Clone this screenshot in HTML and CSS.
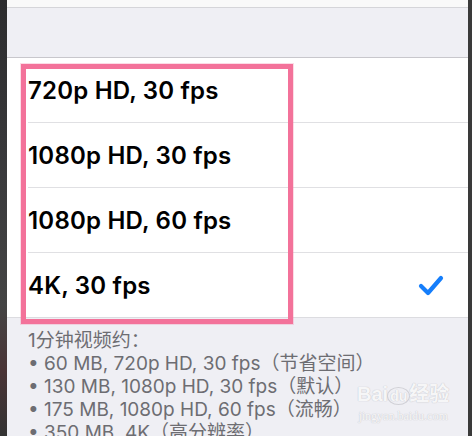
FILE: index.html
```html
<!DOCTYPE html>
<html>
<head>
    <title>视频录制</title>
    <link rel="stylesheet" href="styles.css">
</head>
<body>
    <div class="screen">
        <div class="edge-left"></div>
        <div class="panel">
            <div class="top-strip"></div>
            <div class="section-gap"></div>
            <div class="list">
                <div class="row"><span class="label">720p HD, 30 fps</span></div>
                <div class="row"><span class="label">1080p HD, 30 fps</span></div>
                <div class="row"><span class="label">1080p HD, 60 fps</span></div>
                <div class="row">
                    <span class="label">4K, 30 fps</span>
                    <svg class="check" width="26" height="22" viewBox="0 0 26 22">
                        <path d="M3 11 L10 18 L23 3" fill="none" stroke="#157efb" stroke-width="4.2" stroke-linecap="round" stroke-linejoin="round"/>
                    </svg>
                </div>
            </div>
            <div class="footer">
                <p>1分钟视频约：</p>
                <p>• 60 MB, 720p HD, 30 fps（节省空间）</p>
                <p>• 130 MB, 1080p HD, 30 fps（默认）</p>
                <p>• 175 MB, 1080p HD, 60 fps（流畅）</p>
                <p>• 350 MB, 4K（高分辨率）</p>
            </div>
            <!-- annotation box drawn over the options -->
            <div class="highlight"></div>
            <div class="watermark">
                <div class="wm-logo">Bai<span class="wm-du">du</span>经验</div>
                <div class="wm-url">jingyan.baidu.com</div>
            </div>
        </div>
        <div class="edge-right"></div>
    </div>
</body>
</html>
```

FILE: styles.css
```css
html, body {
    margin: 0;
    padding: 0;
}

body {
    width: 472px;
    height: 436px;
    overflow: hidden;
    background: #2f2f31;
    font-family: "Inter", "Noto Sans CJK SC", sans-serif;
}

.screen {
    display: flex;
    height: 436px;
}

.edge-left {
    width: 7px;
    background: linear-gradient(to bottom, #2c2c2e 0%, #3a3a3c 40%, #444 70%, #4a3436 85%, #333 100%);
}

.edge-right {
    width: 4px;
    background: #3a3a3a;
}

.panel {
    flex: 1;
    position: relative;
    display: flex;
    flex-direction: column;
    background: #efeff4;
    overflow: hidden;
}

.panel > div {
    flex-shrink: 0;
}

.top-strip {
    height: 7px;
    background: #f9f9f9;
    border-bottom: 1px solid #d5d5d9;
}

.section-gap {
    height: 49px;
    border-bottom: 1px solid #c8c7cc;
}

.list {
    background: #fff;
    border-bottom: 1px solid #dcdce0;
}

.row {
    height: 65px;
    box-sizing: border-box;
    margin-left: 21px;
    padding-right: 24px;
    display: flex;
    align-items: center;
    justify-content: space-between;
    border-bottom: 1px solid #e0e0e3;
}

.row:last-child {
    border-bottom: none;
    height: 64px;
}

.label {
    font-size: 24px;
    font-weight: 600;
    color: #000;
    letter-spacing: 0.2px;
}

.check {
    display: block;
    margin-top: 2px;
}

.footer {
    padding: 11px 0 0 21px;
    color: #6d6d72;
    font-size: 19px;
    line-height: 23px;
}

.footer p {
    margin: 0;
    white-space: nowrap;
}

.highlight {
    position: absolute;
    left: 14px;
    top: 64px;
    width: 262px;
    height: 250px;
    border: 5px solid #f3729a;
    box-shadow: 0 0 0 1px rgba(243, 114, 154, 0.25);
}

.watermark {
    position: absolute;
    left: 350px;
    top: 382px;
    color: rgba(255, 255, 255, 0.85);
    text-shadow: 0 0 1px #c9c9cf, 0 0 1px #c9c9cf;
    text-align: center;
}

.wm-logo {
    font-family: "Liberation Sans", "Noto Sans CJK SC", sans-serif;
    font-weight: bold;
    font-size: 20px;
    line-height: 24px;
}

.wm-du {
    font-size: 14px;
    padding: 0 2px;
    border-radius: 50%;
    box-shadow: 0 0 0 1px #d0d0d6;
}

.wm-url {
    font-family: "Liberation Serif", serif;
    font-size: 12px;
    line-height: 16px;
}
```
